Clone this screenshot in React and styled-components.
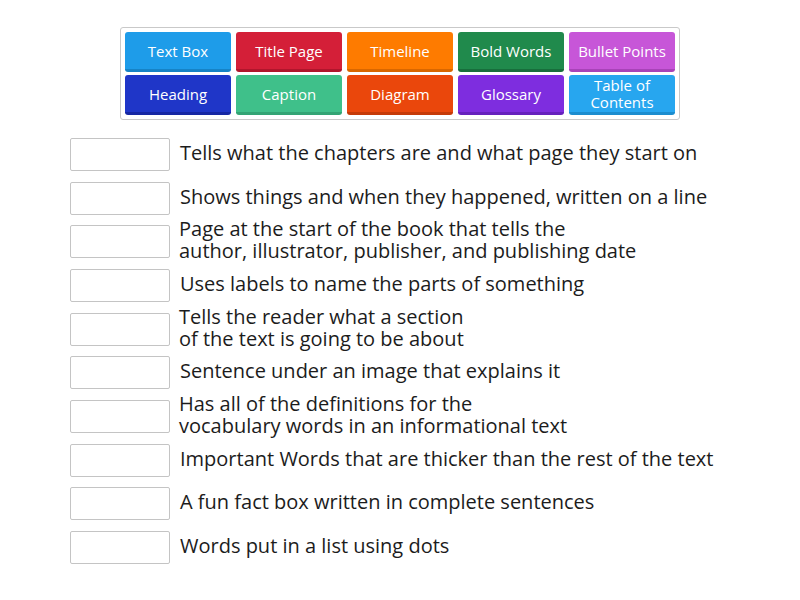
import React from "react";
import styled, { createGlobalStyle } from "styled-components";

const Global = createGlobalStyle`
  html, body { margin: 0; padding: 0; background: #ffffff; }
  body { font-family: "Open Sans", "Noto Sans", sans-serif; }
`;

const Page = styled.div`
  width: 800px;
  height: 600px;
  box-sizing: border-box;
  padding-top: 27px;
  display: flex;
  flex-direction: column;
  align-items: flex-start;
`;

const Bank = styled.div`
  margin-left: 120px;
  width: 560px;
  box-sizing: border-box;
  border: 1px solid #c9c9c9;
  border-radius: 3px;
  padding: 4px;
  display: grid;
  grid-template-columns: repeat(5, 106px);
  grid-auto-rows: 40px;
  column-gap: 5px;
  row-gap: 3px;
`;

const Tile = styled.div`
  background: ${(p) => p.$bg};
  border-bottom: 3px solid ${(p) => p.$dark};
  border-radius: 3px;
  box-sizing: border-box;
  color: #ffffff;
  font-size: 15px;
  line-height: 17px;
  text-align: center;
  white-space: pre;
  display: flex;
  align-items: center;
  justify-content: center;
  padding: 1px 4px 0;
`;

const List = styled.div`
  margin-left: 70px;
  margin-top: 18px;
  display: flex;
  flex-direction: column;
  gap: 10.67px;
`;

const Row = styled.div`
  display: flex;
  align-items: center;
  height: 33px;
`;

const Slot = styled.div`
  width: 100px;
  height: 33px;
  box-sizing: border-box;
  border: 1px solid #c4c4c4;
  border-radius: 2px;
  background: #fff;
  flex: none;
`;

const Clue = styled.div`
  margin-left: ${(p) => (p.$two ? "9px" : "10px")};
  margin-bottom: 3px;
  font-size: 20px;
  line-height: 22px;
  color: #1c1c1c;
  white-space: pre;
`;

const tiles = [
  ["Text Box", "#1e9ce9", "#1683c6"],
  ["Title Page", "#d41f38", "#b0162c"],
  ["Timeline", "#fe7b00", "#d96700"],
  ["Bold Words", "#208a4c", "#186e3c"],
  ["Bullet Points", "#c756d8", "#a843b8"],
  ["Heading", "#1f36c8", "#1627a3"],
  ["Caption", "#3fc08a", "#33a474"],
  ["Diagram", "#ea470c", "#c63a08"],
  ["Glossary", "#7e2ddf", "#6621bd"],
  ["Table of\nContents", "#27a6ef", "#1c8dcf"],
];

const clues = [
  "Tells what the chapters are and what page they start on",
  "Shows things and when they happened, written on a line",
  "Page at the start of the book that tells the\nauthor, illustrator, publisher, and publishing date",
  "Uses labels to name the parts of something",
  "Tells the reader what a section\nof the text is going to be about",
  "Sentence under an image that explains it",
  "Has all of the definitions for the\nvocabulary words in an informational text",
  "Important Words that are thicker than the rest of the text",
  "A fun fact box written in complete sentences",
  "Words put in a list using dots",
];

export default function App() {
  return (
    <Page>
      <Global />
      <Bank>
        {tiles.map(([t, bg, dk]) => (
          <Tile key={t} $bg={bg} $dark={dk}>
            {t}
          </Tile>
        ))}
      </Bank>
      <List>
        {clues.map((c) => (
          <Row key={c}>
            <Slot />
            <Clue $two={c.includes("\n")}>{c}</Clue>
          </Row>
        ))}
      </List>
    </Page>
  );
}
